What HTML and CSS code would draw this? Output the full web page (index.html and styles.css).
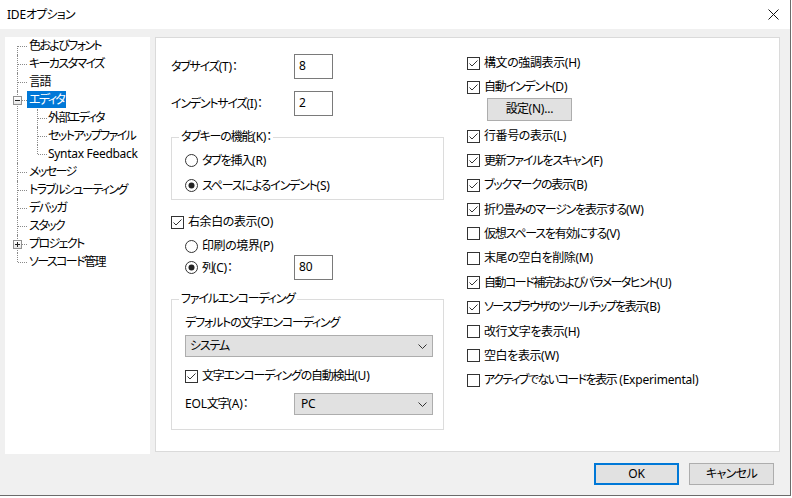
FILE: index.html
```html
<!DOCTYPE html>
<html lang="ja">
<head>
<meta charset="utf-8">
<title>IDEオプション</title>
<link rel="stylesheet" href="styles.css">
</head>
<body>
<div class="window">
  <div class="titlebar">
    <span class="title"><span class="la">IDE</span>オプション</span>
    <svg class="close" width="11" height="11" viewBox="0 0 11 11"><path d="M0.5 0.5 L10.5 10.5 M10.5 0.5 L0.5 10.5" stroke="#111" stroke-width="1" fill="none"/></svg>
  </div>
  <div class="content">
    <div class="tree">
      <ul>
        <li><div class="row"><span class="lbl">色およびフォント</span></div></li>
        <li><div class="row"><span class="lbl">キーカスタマイズ</span></div></li>
        <li><div class="row"><span class="lbl">言語</span></div></li>
        <li><div class="row"><span class="exp minus"></span><span class="lbl sel">エディタ</span></div>
          <ul class="sub">
            <li><div class="row"><span class="lbl">外部エディタ</span></div></li>
            <li><div class="row"><span class="lbl">セットアップファイル</span></div></li>
            <li><div class="row"><span class="lbl latin">Syntax Feedback</span></div></li>
          </ul>
        </li>
        <li><div class="row"><span class="lbl">メッセージ</span></div></li>
        <li><div class="row"><span class="lbl">トラブルシューティング</span></div></li>
        <li><div class="row"><span class="lbl">デバッガ</span></div></li>
        <li><div class="row"><span class="lbl">スタック</span></div></li>
        <li><div class="row"><span class="exp plus"></span><span class="lbl">プロジェクト</span></div></li>
        <li><div class="row"><span class="lbl">ソースコード管理</span></div></li>
      </ul>
    </div>
    <div class="panel">
      <div class="col-left">
        <div class="field">
          <span class="flabel">タブサイズ<span class="ak">(T)</span>：</span>
          <div class="num">8</div>
        </div>
        <div class="field f2">
          <span class="flabel">インデントサイズ<span class="ak">(I)</span>：</span>
          <div class="num">2</div>
        </div>
        <div class="group g1">
          <span class="gtitle">タブキーの機能<span class="ak">(K)</span>：</span>
          <div class="opt r1"><svg class="ico" width="13" height="13" viewBox="0 0 13 13"><circle cx="6.5" cy="6.5" r="6" fill="#fff" stroke="#333"/></svg><span>タブを挿入<span class="ak">(R)</span></span></div>
          <div class="opt r2"><svg class="ico" width="13" height="13" viewBox="0 0 13 13"><circle cx="6.5" cy="6.5" r="6" fill="#fff" stroke="#333"/><circle cx="6.5" cy="6.5" r="3" fill="#222"/></svg><span>スペースによるインデント<span class="ak">(S)</span></span></div>
        </div>
        <div class="opt margin-check"><svg class="ico" width="13" height="13" viewBox="0 0 13 13"><rect x="0.5" y="0.5" width="12" height="12" fill="#fff" stroke="#333"/><path d="M2.5 6.5 L5 9 L10.5 3.5" fill="none" stroke="#333"/></svg><span class="kj">右余白の表示<span class="ak">(O)</span></span></div>
        <div class="opt indent print"><svg class="ico" width="13" height="13" viewBox="0 0 13 13"><circle cx="6.5" cy="6.5" r="6" fill="#fff" stroke="#333"/></svg><span class="kj">印刷の境界<span class="ak">(P)</span></span></div>
        <div class="field indent colrow">
          <div class="opt flabel short"><svg class="ico" width="13" height="13" viewBox="0 0 13 13"><circle cx="6.5" cy="6.5" r="6" fill="#fff" stroke="#333"/><circle cx="6.5" cy="6.5" r="3" fill="#222"/></svg><span>列<span class="ak">(C)</span>：</span></div>
          <div class="num">80</div>
        </div>
        <div class="group g2">
          <span class="gtitle">ファイルエンコーディング</span>
          <div class="plain">デフォルトの文字エンコーディング</div>
          <div class="combo wide"><span>システム</span><svg width="9" height="5" viewBox="0 0 9 5"><path d="M0.5 0.5 L4.5 4.5 L8.5 0.5" fill="none" stroke="#333"/></svg></div>
          <div class="opt autodetect"><svg class="ico" width="13" height="13" viewBox="0 0 13 13"><rect x="0.5" y="0.5" width="12" height="12" fill="#fff" stroke="#333"/><path d="M2.5 6.5 L5 9 L10.5 3.5" fill="none" stroke="#333"/></svg><span>文字エンコーディングの自動検出<span class="ak">(U)</span></span></div>
          <div class="eol">
            <span class="flabel short"><span class="la">EOL</span>文字<span class="ak">(A)</span>：</span>
            <div class="combo narrow"><span class="la">PC</span><svg width="9" height="5" viewBox="0 0 9 5"><path d="M0.5 0.5 L4.5 4.5 L8.5 0.5" fill="none" stroke="#333"/></svg></div>
          </div>
        </div>
      </div>
      <div class="col-right">
        <div class="opt"><svg class="ico" width="13" height="13" viewBox="0 0 13 13"><rect x="0.5" y="0.5" width="12" height="12" fill="#fff" stroke="#333"/><path d="M2.5 6.5 L5 9 L10.5 3.5" fill="none" stroke="#333"/></svg><span class="kj">構文の強調表示<span class="ak">(H)</span></span></div>
        <div class="withbtn">
          <div class="opt"><svg class="ico" width="13" height="13" viewBox="0 0 13 13"><rect x="0.5" y="0.5" width="12" height="12" fill="#fff" stroke="#333"/><path d="M2.5 6.5 L5 9 L10.5 3.5" fill="none" stroke="#333"/></svg><span>自動インデント<span class="ak">(D)</span></span></div>
          <div class="btn setbtn">設定<span class="ak">(N)...</span></div>
        </div>
        <div class="opt"><svg class="ico" width="13" height="13" viewBox="0 0 13 13"><rect x="0.5" y="0.5" width="12" height="12" fill="#fff" stroke="#333"/><path d="M2.5 6.5 L5 9 L10.5 3.5" fill="none" stroke="#333"/></svg><span class="kj">行番号の表示<span class="ak">(L)</span></span></div>
        <div class="opt"><svg class="ico" width="13" height="13" viewBox="0 0 13 13"><rect x="0.5" y="0.5" width="12" height="12" fill="#fff" stroke="#333"/><path d="M2.5 6.5 L5 9 L10.5 3.5" fill="none" stroke="#333"/></svg><span>更新ファイルをスキャン<span class="ak">(F)</span></span></div>
        <div class="opt"><svg class="ico" width="13" height="13" viewBox="0 0 13 13"><rect x="0.5" y="0.5" width="12" height="12" fill="#fff" stroke="#333"/><path d="M2.5 6.5 L5 9 L10.5 3.5" fill="none" stroke="#333"/></svg><span>ブックマークの表示<span class="ak">(B)</span></span></div>
        <div class="opt"><svg class="ico" width="13" height="13" viewBox="0 0 13 13"><rect x="0.5" y="0.5" width="12" height="12" fill="#fff" stroke="#333"/><path d="M2.5 6.5 L5 9 L10.5 3.5" fill="none" stroke="#333"/></svg><span>折り畳みのマージンを表示する<span class="ak">(W)</span></span></div>
        <div class="opt"><svg class="ico" width="13" height="13" viewBox="0 0 13 13"><rect x="0.5" y="0.5" width="12" height="12" fill="#fff" stroke="#333"/></svg><span>仮想スペースを有効にする<span class="ak">(V)</span></span></div>
        <div class="opt"><svg class="ico" width="13" height="13" viewBox="0 0 13 13"><rect x="0.5" y="0.5" width="12" height="12" fill="#fff" stroke="#333"/></svg><span class="kj">末尾の空白を削除<span class="ak">(M)</span></span></div>
        <div class="opt"><svg class="ico" width="13" height="13" viewBox="0 0 13 13"><rect x="0.5" y="0.5" width="12" height="12" fill="#fff" stroke="#333"/><path d="M2.5 6.5 L5 9 L10.5 3.5" fill="none" stroke="#333"/></svg><span class="kn">自動コード補完およびパラメータヒント<span class="ak">(U)</span></span></div>
        <div class="opt"><svg class="ico" width="13" height="13" viewBox="0 0 13 13"><rect x="0.5" y="0.5" width="12" height="12" fill="#fff" stroke="#333"/><path d="M2.5 6.5 L5 9 L10.5 3.5" fill="none" stroke="#333"/></svg><span class="kn">ソースブラウザのツールチップを表示<span class="ak">(B)</span></span></div>
        <div class="opt"><svg class="ico" width="13" height="13" viewBox="0 0 13 13"><rect x="0.5" y="0.5" width="12" height="12" fill="#fff" stroke="#333"/></svg><span class="kj">改行文字を表示<span class="ak">(H)</span></span></div>
        <div class="opt"><svg class="ico" width="13" height="13" viewBox="0 0 13 13"><rect x="0.5" y="0.5" width="12" height="12" fill="#fff" stroke="#333"/></svg><span class="kj">空白を表示<span class="ak">(W)</span></span></div>
        <div class="opt"><svg class="ico" width="13" height="13" viewBox="0 0 13 13"><rect x="0.5" y="0.5" width="12" height="12" fill="#fff" stroke="#333"/></svg><span class="kn">アクティブでないコードを表示<span class="ak sp"> (Experimental)</span></span></div>
      </div>
    </div>
  </div>
  <div class="buttons">
    <div class="btn default"><span class="la">OK</span></div>
    <div class="btn">キャンセル</div>
  </div>
</div>
</body>
</html>
```
FILE: styles.css
```css
* { box-sizing: border-box; }
html, body { margin: 0; padding: 0; background: #fff; }
body {
  font-family: "Noto Sans", "Noto Sans CJK JP", sans-serif;
  font-size: 12px;
  line-height: 16px;
  color: #000;
  font-feature-settings: "palt";
  letter-spacing: -1.2px;
}
.kj { letter-spacing: -0.4px; }
.kn { letter-spacing: -1.5px; }
.ak, .la { letter-spacing: -0.2px; }
.ak.sp { white-space: pre; }
.window {
  width: 791px;
  height: 496px;
  background: #f0f0f0;
  border-right: 1px solid #6b6b6b;
  border-bottom: 1px solid #6b6b6b;
  display: flex;
  flex-direction: column;
}
.titlebar {
  height: 29px;
  flex: none;
  background: #fff;
  display: flex;
  align-items: center;
  justify-content: space-between;
  padding: 0 11px 0 7px;
}
.title { line-height: 16px; letter-spacing: -0.8px; }
.close { display: block; }

.content {
  display: flex;
  align-items: flex-start;
  gap: 5px;
  padding: 8px 0 0 5px;
}
.tree {
  width: 145px;
  height: 417px;
  background: #fff;
  flex: none;
  letter-spacing: -1.6px;
}
.tree ul { list-style: none; margin: 0; padding: 0; }
.tree li { position: relative; }
.tree li::before {
  content: "";
  position: absolute;
  left: 12px;
  top: 0;
  bottom: 0;
  border-left: 1px dotted #8a8a8a;
}
.tree > ul > li:first-child::before { top: 9px; }
.tree li:last-child::before { bottom: auto; height: 9px; }
.tree .row {
  position: relative;
  height: 18px;
  line-height: 18px;
  padding-left: 22px;
  white-space: nowrap;
}
.tree .row::before {
  content: "";
  position: absolute;
  left: 13px;
  top: 9px;
  width: 9px;
  border-top: 1px dotted #8a8a8a;
}
.tree .sub li::before { left: 32px; }
.tree .sub .row { padding-left: 41px; }
.tree .sub .row::before { left: 33px; width: 9px; }
.lbl { display: inline-block; padding: 0 2px; line-height: 17px; }
.lbl.latin { letter-spacing: -0.3px; }
.lbl.sel { background: #0078d7; color: #fff; }
.exp {
  position: absolute;
  left: 8px;
  top: 5px;
  width: 9px;
  height: 9px;
  border: 1px solid #919191;
  background: linear-gradient(#fff, #e6e6e6);
  z-index: 1;
}
.exp::after {
  content: "";
  position: absolute;
  left: 1px;
  top: 3px;
  width: 5px;
  border-top: 1px solid #222;
}
.exp.plus::before {
  content: "";
  position: absolute;
  left: 3px;
  top: 1px;
  height: 5px;
  border-left: 1px solid #222;
}

.panel {
  width: 625px;
  height: 415px;
  background: #fff;
  border: 1px solid #dadada;
  display: flex;
  gap: 23px;
  padding: 16px 0 0 15px;
  flex: none;
}
.col-left { width: 273px; flex: none; display: flex; flex-direction: column; }
.col-right { display: flex; flex-direction: column; gap: 6.4px; }

.field { display: flex; align-items: center; height: 25px; }
.f2 { margin-top: 12px; }
.flabel { width: 123px; flex: none; }
.flabel.short { width: 109px; }
.num {
  width: 39px;
  height: 25px;
  border: 1px solid #7a7a7a;
  padding: 3px 0 0 4px;
  line-height: 16px;
  letter-spacing: 0;
}

.opt {
  display: flex;
  align-items: center;
  gap: 4px;
  height: 18px;
  white-space: nowrap;
}
.ico { display: block; flex: none; }

.group {
  border: 1px solid #dcdcdc;
  padding: 0 0 0 13px;
}
.gtitle {
  display: block;
  width: max-content;
  line-height: 16px;
  height: 16px;
  margin: -9px 0 0 -6px;
  padding: 0 2px;
  background: #fff;
}
.g1 { margin-top: 21px; padding-bottom: 1px; }
.g1 .opt { height: 25px; }
.g1 .r1 { margin-top: 3px; }

.margin-check { margin-top: 13px; }
.indent { margin-left: 14px; }
.print { margin-top: 6px; }

.g2 { margin-top: 19px; padding-bottom: 14px; }
.plain { height: 18px; line-height: 18px; margin-top: 7px; }
.combo {
  display: flex;
  align-items: center;
  justify-content: space-between;
  height: 22px;
  background: #e1e1e1;
  border: 1px solid #adadad;
  padding: 0 5px 0 4px;
}
.combo svg { display: block; }
.combo.wide { width: 248px; margin-top: 3px; }
.combo.narrow { width: 139px; padding-left: 6px; }
.autodetect { margin-top: 10px; }
.eol { display: flex; align-items: center; margin-top: 8px; height: 22px; }

.withbtn { display: flex; flex-direction: column; }
.btn {
  display: flex;
  align-items: center;
  justify-content: center;
  background: #e1e1e1;
  border: 1px solid #adadad;
  width: 85px;
  height: 22px;
  letter-spacing: -0.6px;
}
.setbtn { margin: 1.6px 0 0 20px; height: 23px; }

.buttons {
  display: flex;
  justify-content: flex-end;
  gap: 10px;
  padding: 9px 16px 0 0;
}
.btn.default { border: 2px solid #0078d7; }
```
